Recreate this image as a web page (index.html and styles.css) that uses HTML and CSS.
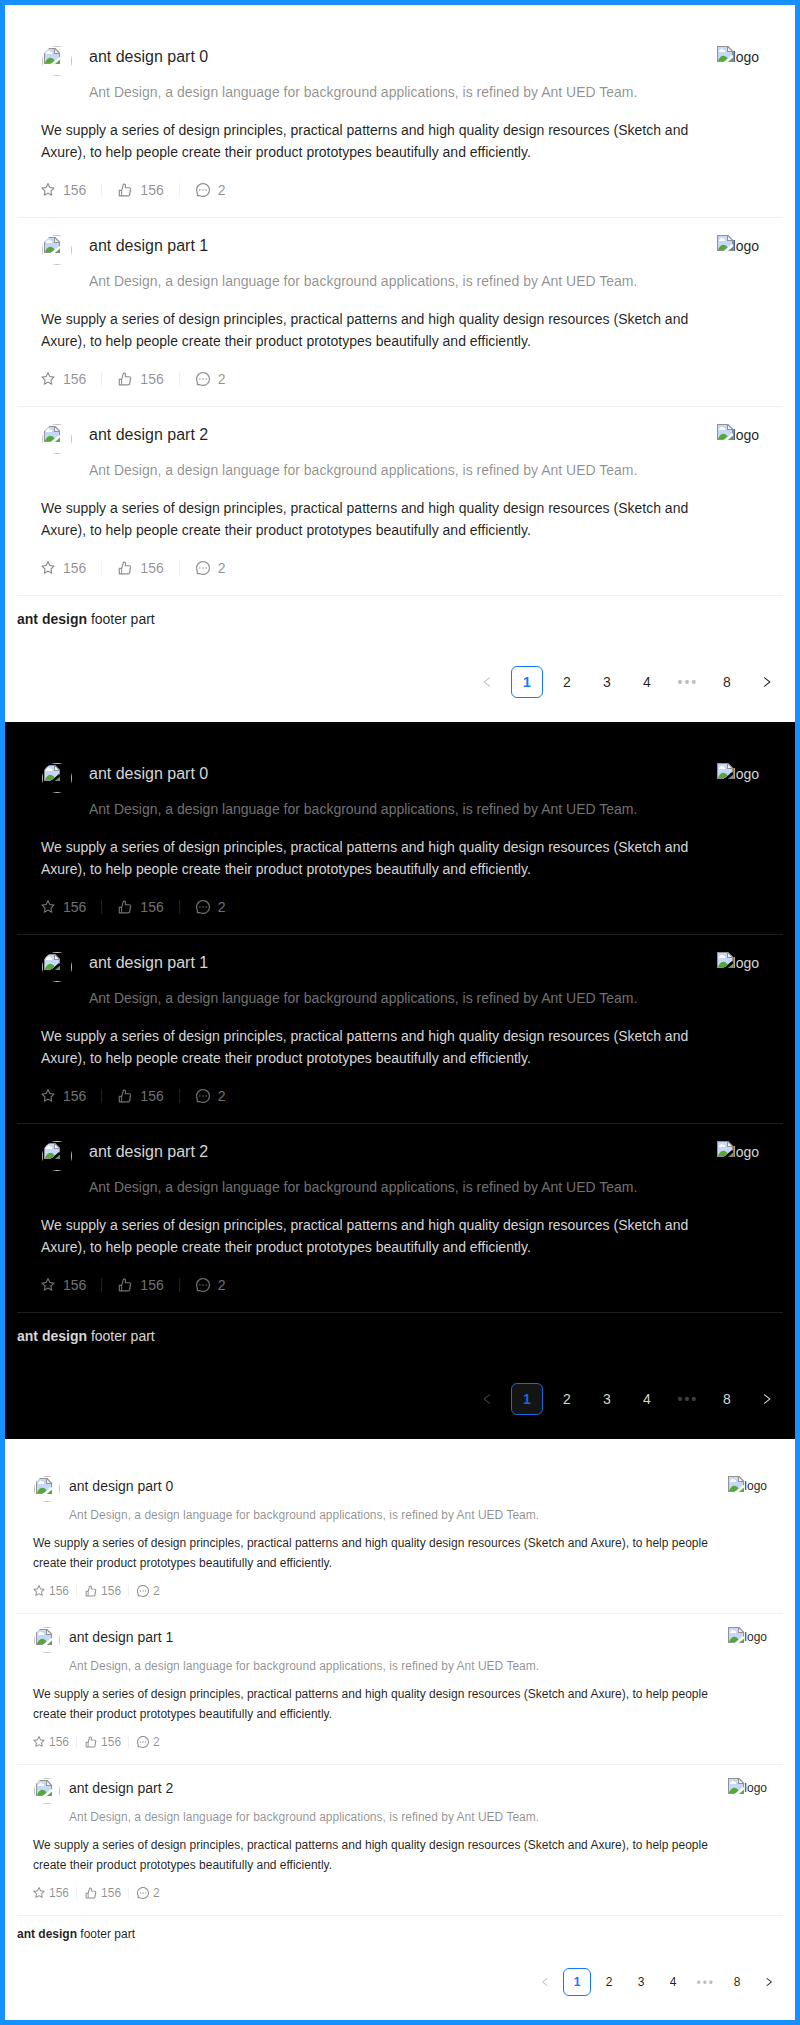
FILE: index.html
```html
<!DOCTYPE html>
<html lang="en">
<head>
<meta charset="utf-8">
<title>List</title>
<link rel="stylesheet" href="styles.css">
</head>
<body>
<svg class="sprite" aria-hidden="true">
  <symbol id="star" viewBox="64 64 896 896"><path d="M908.1 353.1l-253.9-36.9L540.7 86.1c-3.1-6.3-8.2-11.4-14.5-14.5-15.8-7.8-35-1.3-42.9 14.5L369.8 316.2l-253.9 36.9c-7 1-13.4 4.3-18.3 9.3a32.05 32.05 0 00.6 45.3l183.7 179.1-43.4 252.9a31.95 31.95 0 0046.4 33.7L512 754l227.1 119.4c6.2 3.3 13.4 4.4 20.3 3.2 17.4-3 29.1-19.5 26.1-36.9l-43.4-252.9 183.7-179.1c5-4.9 8.3-11.3 9.3-18.3 2.7-17.5-9.5-33.7-27-36.3zM664.8 561.6l36.1 210.3L512 672.7 323.1 772l36.1-210.3-152.8-149L417.6 382 512 190.7 606.4 382l211.2 30.7-152.8 148.9z"/></symbol>
  <symbol id="like" viewBox="64 64 896 896"><path d="M885.9 533.7c16.8-22.2 26.1-49.4 26.1-77.7 0-44.9-25.1-87.4-65.5-111.1a67.67 67.67 0 00-34.3-9.3H572.4l6-122.9c1.4-29.7-9.1-57.9-29.5-79.4A106.62 106.62 0 00471 99.9c-52 0-98 35-111.8 85.1l-85.9 311H144c-17.7 0-32 14.3-32 32v364c0 17.7 14.3 32 32 32h601.3c9.2 0 18.2-1.8 26.5-5.4 47.6-20.3 78.3-66.8 78.3-118.4 0-12.6-1.8-25-5.4-37 16.8-22.2 26.1-49.4 26.1-77.7 0-12.6-1.8-25-5.4-37 16.8-22.2 26.1-49.4 26.1-77.7-.2-12.6-2-25.1-5.6-37.1zM184 852V568h81v284h-81zm636.4-353l-21.9 19 13.9 25.4a56.2 56.2 0 016.9 27.3c0 16.5-7.2 32.2-19.6 43l-21.9 19 13.9 25.4a56.2 56.2 0 016.9 27.3c0 16.5-7.2 32.2-19.6 43l-21.9 19 13.9 25.4a56.2 56.2 0 016.9 27.3c0 22.4-13.2 42.6-33.6 51.8H329V564.8l99.5-360.5a44.1 44.1 0 0142.2-32.3c7.6 0 15.1 2.2 21.1 6.7 9.9 7.4 15.2 18.6 14.6 30.5l-9.6 198.4h314.4C829 418.5 840 436.9 840 456c0 16.5-7.2 32.1-19.6 43z"/></symbol>
  <symbol id="message" viewBox="64 64 896 896"><path d="M464 512a48 48 0 1096 0 48 48 0 10-96 0zm200 0a48 48 0 1096 0 48 48 0 10-96 0zm-400 0a48 48 0 1096 0 48 48 0 10-96 0zm661.2-173.6c-22.6-53.7-55-101.9-96.3-143.3a444.35 444.35 0 00-143.3-96.3C630.6 75.7 572.2 64 512 64h-2c-60.6.3-119.3 12.3-174.5 35.9a445.35 445.35 0 00-142 96.5c-40.9 41.3-73 89.3-95.2 142.8-23 55.4-34.6 114.3-34.3 174.9A449.4 449.4 0 00112 714v152a46 46 0 0046 46h152.1A449.4 449.4 0 00510 960h2.1c59.9 0 118-11.6 172.7-34.3a444.48 444.48 0 00142.8-95.2c41.3-40.9 73.8-88.7 96.5-142 23.6-55.2 35.6-113.9 35.9-174.5.3-60.9-11.5-120-34.8-175.6zm-151.1 438C704 845.8 611 884 512 884h-1.7c-60.3-.3-120.2-15.3-173.1-43.5l-8.4-4.5H188V695.2l-4.5-8.4C155.3 633.9 140.3 574 140 513.7c-.4-99.7 37.7-193.3 107.6-263.8 69.8-70.5 163.1-109.5 262.8-109.9h1.7c50 0 98.5 9.7 144.2 28.9 44.6 18.7 84.6 45.6 119 80 34.3 34.3 61.3 74.4 80 119 19.4 46.2 29.1 95.2 28.9 145.8-.6 99.6-39.7 192.9-110.1 262.7z"/></symbol>
  <symbol id="left" viewBox="64 64 896 896"><path d="M724 218.3V141c0-6.7-7.7-10.4-12.9-6.3L260.3 486.8a31.86 31.86 0 000 50.3l450.8 352.1c5.3 4.1 12.9.4 12.9-6.3v-77.3c0-4.9-2.3-9.6-6.1-12.6l-360-281 360-281.1c3.8-3 6.1-7.7 6.1-12.6z"/></symbol>
  <symbol id="right" viewBox="64 64 896 896"><path d="M765.7 486.8L314.9 134.7A7.97 7.97 0 00302 141v77.3c0 4.9 2.3 9.6 6.1 12.6l360 281.1-360 281.1c-3.9 3-6.1 7.7-6.1 12.6V883c0 6.7 7.7 10.4 12.9 6.3l450.8-352.1a31.96 31.96 0 000-50.4z"/></symbol>
  <symbol id="picture" viewBox="0 0 16 16">
    <path fill="#c6d7f7" d="M1 1h10v4h4v4L8 15H1z"/>
    <path fill="#fff" d="M2 6a1.3 1.3 0 0 1 1-1.8 1.8 1.8 0 0 1 3.3-.5A1.4 1.4 0 0 1 7.7 6z"/>
    <path fill="#52a935" d="M1 15c1.2-3 3-5.2 5-5.2 2 0 3.4 1 4.6 2.6L7.6 15z"/>
    <path fill="#52a935" d="M12 15l3-2.6V15z"/>
    <path fill="#929292" d="M0 0h11.4L16 4.7V9l-1 .8V6h-5V1H1v14h6.6l-1.1 1H0z"/>
    <path fill="#f4f4f4" d="M11 1.4V5h3.6z"/>
    <path fill="#868686" d="M16 11.5V16h-5.2l1.2-1h3v-2.6z"/>
  </symbol>
</svg>
<main class="board" id="board"></main>
<script src="list.js"></script>
</body>
</html>
```
FILE: styles.css
```css
body {
  margin: 0;
  background: #1890ff;
  font-family: "Liberation Sans", Arial, sans-serif;
}
.sprite { position: absolute; width: 0; height: 0; }
.board { padding: 5px; }

.panel {
  --text: rgba(0, 0, 0, .88);
  --muted: rgba(0, 0, 0, .45);
  --disabled: rgba(0, 0, 0, .25);
  --split: rgba(5, 5, 5, .06);
  --primary: #1677ff;
  --active-bg: #fff;
  --fs: 14px;
  --lh: 22px;
  padding: 24px 12px;
  background: #fff;
  color: var(--text);
  font-size: var(--fs);
  line-height: var(--lh);
}
.panel.dark {
  --text: rgba(255, 255, 255, .85);
  --muted: rgba(255, 255, 255, .45);
  --disabled: rgba(255, 255, 255, .25);
  --split: rgba(253, 253, 253, .12);
  --primary: #1668dc;
  --active-bg: #141414;
  background: #000;
}
.panel.compact { --fs: 12px; --lh: 20px; }

.item {
  display: flex;
  justify-content: space-between;
  padding: 16px 24px;
  border-bottom: 1px solid var(--split);
}
.compact .item { padding: 12px 16px; }
.item-main { flex: 1; }

.meta { display: flex; gap: 16px; margin-bottom: 16px; }
.compact .meta { gap: 8px; margin-bottom: 8px; }
.avatar {
  box-sizing: border-box;
  flex: none;
  width: 32px;
  height: 32px;
  border: 1px solid transparent;
  border-radius: 50%;
  overflow: hidden;
}
.compact .avatar { width: 28px; height: 28px; }
.avatar-frame {
  box-sizing: border-box;
  height: 100%;
  padding: 1px;
  border: 1px solid #c0c0c0;
}
.picture { display: block; flex: none; width: 16px; height: 16px; }
.title { margin: 0 0 12px; font-size: 16px; font-weight: 400; line-height: 24px; }
.compact .title { margin-bottom: 8px; font-size: 14px; line-height: 22px; }
.description { color: var(--muted); }

.actions {
  display: flex;
  margin: 16px 0 0;
  padding: 0;
  list-style: none;
  color: var(--muted);
}
.compact .actions { margin-top: 8px; }
.action {
  display: flex;
  align-items: center;
  gap: 8px;
  padding-right: 16px;
}
.action + .action { padding-left: 16px; }
.compact .action { gap: 4px; padding-right: 8px; }
.compact .action + .action { padding-left: 8px; }
.action:not(:last-child) {
  background: linear-gradient(var(--split), var(--split)) right center / 1px calc(var(--lh) - 8px) no-repeat;
}
.icon { display: block; width: 1em; height: 1em; fill: currentColor; }

.extra { display: flex; align-items: flex-start; margin: 1px 0 0 24px; }
.compact .extra { margin-left: 16px; }

.footer { padding: 12px 0; }
.compact .footer { padding: 8px 0; }

.pagination { display: flex; justify-content: flex-end; gap: 8px; margin-top: 24px; }
.compact .pagination { gap: 4px; margin-top: 16px; }
.page {
  box-sizing: border-box;
  display: flex;
  align-items: center;
  justify-content: center;
  width: 32px;
  height: 32px;
  border: 1px solid transparent;
  border-radius: 6px;
}
.compact .page { width: 28px; height: 28px; }
.page.active {
  border-color: var(--primary);
  background: var(--active-bg);
  color: var(--primary);
  font-weight: 600;
}
.page.arrow { font-size: 12px; }
.compact .page.arrow { font-size: 10px; }
.page.disabled { color: var(--disabled); }
.page.dots { color: var(--disabled); font-weight: 700; letter-spacing: 2px; text-indent: .13em; }
```
FILE: list.js
```js
const icon = (name) => `<svg class="icon"><use href="#${name}"/></svg>`;
const picture = '<svg class="picture"><use href="#picture"/></svg>';
const action = (name, count) => `<li class="action">${icon(name)}<span>${count}</span></li>`;

const item = (index) => `
  <article class="item">
    <div class="item-main">
      <div class="meta">
        <div class="avatar"><div class="avatar-frame">${picture}</div></div>
        <div>
          <h4 class="title">ant design part ${index}</h4>
          <div class="description">Ant Design, a design language for background applications, is refined by Ant UED Team.</div>
        </div>
      </div>
      <div>We supply a series of design principles, practical patterns and high quality design resources (Sketch and Axure), to help people create their product prototypes beautifully and efficiently.</div>
      <ul class="actions">${action('star', 156)}${action('like', 156)}${action('message', 2)}</ul>
    </div>
    <div class="extra">${picture}<span>logo</span></div>
  </article>`;

const panel = (theme) => `
  <section class="panel ${theme}">
    ${[0, 1, 2].map(item).join('')}
    <div class="footer"><b>ant design</b> footer part</div>
    <nav class="pagination">
      <span class="page arrow disabled">${icon('left')}</span>
      <span class="page active">1</span>
      <span class="page">2</span>
      <span class="page">3</span>
      <span class="page">4</span>
      <span class="page dots">•••</span>
      <span class="page">8</span>
      <span class="page arrow">${icon('right')}</span>
    </nav>
  </section>`;

document.getElementById('board').innerHTML = ['default', 'dark', 'compact'].map(panel).join('');
```
